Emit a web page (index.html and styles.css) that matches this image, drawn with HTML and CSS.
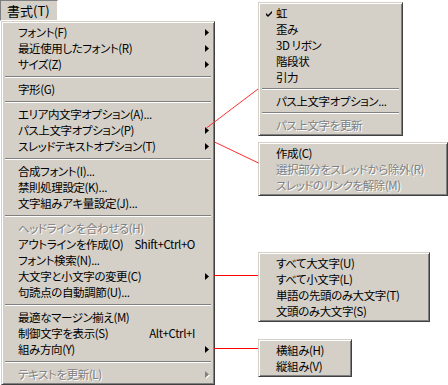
FILE: index.html
```html
<!DOCTYPE html>
<html lang="ja">
<head>
<meta charset="utf-8">
<title>書式メニュー</title>
<link rel="stylesheet" href="styles.css">
</head>
<body>
<div class="menubar">
  <div class="menu-title">書式(T)</div>
</div>

<div class="menu main">
  <div class="item"><span class="label">フォント(F)</span><span class="key"></span><span class="sub-arrow"><svg width="4" height="7" viewBox="0 0 4 7"><path d="M0 0L4 3.5L0 7Z"/></svg></span></div>
  <div class="item"><span class="label">最近使用したフォント(R)</span><span class="key"></span><span class="sub-arrow"><svg width="4" height="7" viewBox="0 0 4 7"><path d="M0 0L4 3.5L0 7Z"/></svg></span></div>
  <div class="item"><span class="label">サイズ(Z)</span><span class="key"></span><span class="sub-arrow"><svg width="4" height="7" viewBox="0 0 4 7"><path d="M0 0L4 3.5L0 7Z"/></svg></span></div>
  <div class="sep"></div>
  <div class="item"><span class="label">字形(G)</span></div>
  <div class="sep"></div>
  <div class="item"><span class="label">エリア内文字オプション(A)...</span></div>
  <div class="item"><span class="label">パス上文字オプション(P)</span><span class="key"></span><span class="sub-arrow"><svg width="4" height="7" viewBox="0 0 4 7"><path d="M0 0L4 3.5L0 7Z"/></svg></span></div>
  <div class="item"><span class="label">スレッドテキストオプション(T)</span><span class="key"></span><span class="sub-arrow"><svg width="4" height="7" viewBox="0 0 4 7"><path d="M0 0L4 3.5L0 7Z"/></svg></span></div>
  <div class="sep"></div>
  <div class="item"><span class="label">合成フォント(I)...</span></div>
  <div class="item"><span class="label">禁則処理設定(K)...</span></div>
  <div class="item"><span class="label">文字組みアキ量設定(J)...</span></div>
  <div class="sep"></div>
  <div class="item disabled"><span class="label">ヘッドラインを合わせる(H)</span></div>
  <div class="item"><span class="label">アウトラインを作成(O)</span><span class="key">Shift+Ctrl+O</span><span class="sub-arrow"></span></div>
  <div class="item"><span class="label">フォント検索(N)...</span></div>
  <div class="item"><span class="label">大文字と小文字の変更(C)</span><span class="key"></span><span class="sub-arrow"><svg width="4" height="7" viewBox="0 0 4 7"><path d="M0 0L4 3.5L0 7Z"/></svg></span></div>
  <div class="item"><span class="label">句読点の自動調節(U)...</span></div>
  <div class="sep"></div>
  <div class="item"><span class="label">最適なマージン揃え(M)</span></div>
  <div class="item"><span class="label">制御文字を表示(S)</span><span class="key">Alt+Ctrl+I</span><span class="sub-arrow"></span></div>
  <div class="item"><span class="label">組み方向(Y)</span><span class="key"></span><span class="sub-arrow"><svg width="4" height="7" viewBox="0 0 4 7"><path d="M0 0L4 3.5L0 7Z"/></svg></span></div>
  <div class="sep"></div>
  <div class="item disabled"><span class="label">テキストを更新(L)</span><span class="key"></span><span class="sub-arrow"><svg class="arrow-dis" width="5" height="8" viewBox="0 0 5 8"><path class="hl" d="M1 1L5 4.5L1 8Z"/><path d="M0 0L4 3.5L0 7Z"/></svg></span></div>
</div>

<div class="menu popup pop-path">
  <div class="item checked"><span class="check"><svg width="7" height="7" viewBox="0 0 7 7"><path d="M0 3L2 5L6 1L6 3L2 7L0 5Z"/></svg></span><span class="label">虹</span></div>
  <div class="item"><span class="label">歪み</span></div>
  <div class="item"><span class="label">3D リボン</span></div>
  <div class="item"><span class="label">階段状</span></div>
  <div class="item"><span class="label">引力</span></div>
  <div class="sep narrow"></div>
  <div class="item"><span class="label">パス上文字オプション...</span></div>
  <div class="sep narrow"></div>
  <div class="item disabled"><span class="label">パス上文字を更新</span></div>
</div>

<div class="menu popup pop-thread">
  <div class="item"><span class="label">作成(C)</span></div>
  <div class="item disabled"><span class="label">選択部分をスレッドから除外(R)</span></div>
  <div class="item disabled"><span class="label">スレッドのリンクを解除(M)</span></div>
</div>

<div class="menu popup pop-case">
  <div class="item"><span class="label">すべて大文字(U)</span></div>
  <div class="item"><span class="label">すべて小文字(L)</span></div>
  <div class="item"><span class="label">単語の先頭のみ大文字(T)</span></div>
  <div class="item"><span class="label">文頭のみ大文字(S)</span></div>
</div>

<div class="menu popup pop-dir">
  <div class="item"><span class="label">横組み(H)</span></div>
  <div class="item"><span class="label">縦組み(V)</span></div>
</div>

<svg class="connectors" width="448" height="385" viewBox="0 0 448 385">
  <line class="soft" x1="206.5" y1="128" x2="258" y2="89"/>
  <line class="soft" x1="214.5" y1="142" x2="258.5" y2="163"/>
  <line x1="214" y1="275.5" x2="258" y2="275.5"/>
  <line x1="214" y1="348.5" x2="258" y2="348.5"/>
</svg>
</body>
</html>
```

FILE: styles.css
```css
* {
  box-sizing: border-box;
}

html, body {
  margin: 0;
  padding: 0;
  background: #ffffff;
}

body {
  position: relative;
  width: 448px;
  height: 385px;
  overflow: hidden;
  font-family: "Noto Sans CJK JP", "Noto Sans", sans-serif;
  font-size: 11.5px;
  letter-spacing: -0.4px;
  font-feature-settings: "palt";
  color: #000000;
}

.menubar {
  height: 21px;
  display: flex;
}

.menu-title {
  width: 58px;
  height: 21px;
  background: #d4d0c8;
  border-top: 1px solid #808080;
  border-left: 1px solid #808080;
  border-right: 1px solid #ffffff;
  border-bottom: 1px solid #ffffff;
  font-size: 13px;
  letter-spacing: 0;
  line-height: 19px;
  padding-left: 6px;
  white-space: nowrap;
}

.menu {
  background: #d4d0c8;
  border: 1px solid;
  border-color: #d4d0c8 #404040 #404040 #d4d0c8;
  box-shadow: inset 1px 1px 0 #ffffff, inset -1px -1px 0 #808080;
  padding: 2px;
}

.main {
  margin-left: 1px;
  width: 214px;
}

.item {
  height: 16px;
  display: grid;
  grid-template-columns: 1fr auto 17px;
  align-items: center;
  padding-left: 14px;
  line-height: 16px;
  white-space: nowrap;
  position: relative;
}

.label {
  display: block;
}

.key {
  text-align: right;
  padding-left: 6px;
}

.sub-arrow {
  display: flex;
  justify-content: flex-end;
  align-items: center;
  padding-right: 3px;
  height: 16px;
}

.sub-arrow svg {
  display: block;
  fill: #000000;
}

.sub-arrow .arrow-dis {
  fill: #808080;
  margin-right: -1px;
  margin-top: 1px;
}

.sub-arrow .arrow-dis .hl {
  fill: #ffffff;
}

.disabled {
  color: #808080;
  text-shadow: 1px 1px 0 #ffffff;
}

.sep {
  height: 9px;
  padding-top: 4px;
  margin: 0 1px;
}

.sep::before {
  content: "";
  display: block;
  border-top: 1px solid #808080;
  border-bottom: 1px solid #ffffff;
}

.sep.narrow {
  height: 8px;
  padding-top: 3px;
}

.popup {
  position: absolute;
  left: 258px;
}

.popup .item {
  padding-left: 15px;
  grid-template-columns: 1fr;
}

.check {
  position: absolute;
  left: 5px;
  top: 5px;
  display: block;
}

.check svg {
  display: block;
  fill: #000000;
}

.pop-path {
  top: 2px;
  width: 145px;
}

.pop-thread {
  top: 142px;
  width: 190px;
}

.pop-case {
  top: 252px;
  width: 172px;
}

.pop-dir {
  top: 339px;
  width: 94px;
}

.connectors {
  position: absolute;
  left: 0;
  top: 0;
  pointer-events: none;
}

.connectors line {
  stroke: #ff0000;
  stroke-width: 1;
}

.connectors line.soft {
  stroke: #ff3030;
}
```
